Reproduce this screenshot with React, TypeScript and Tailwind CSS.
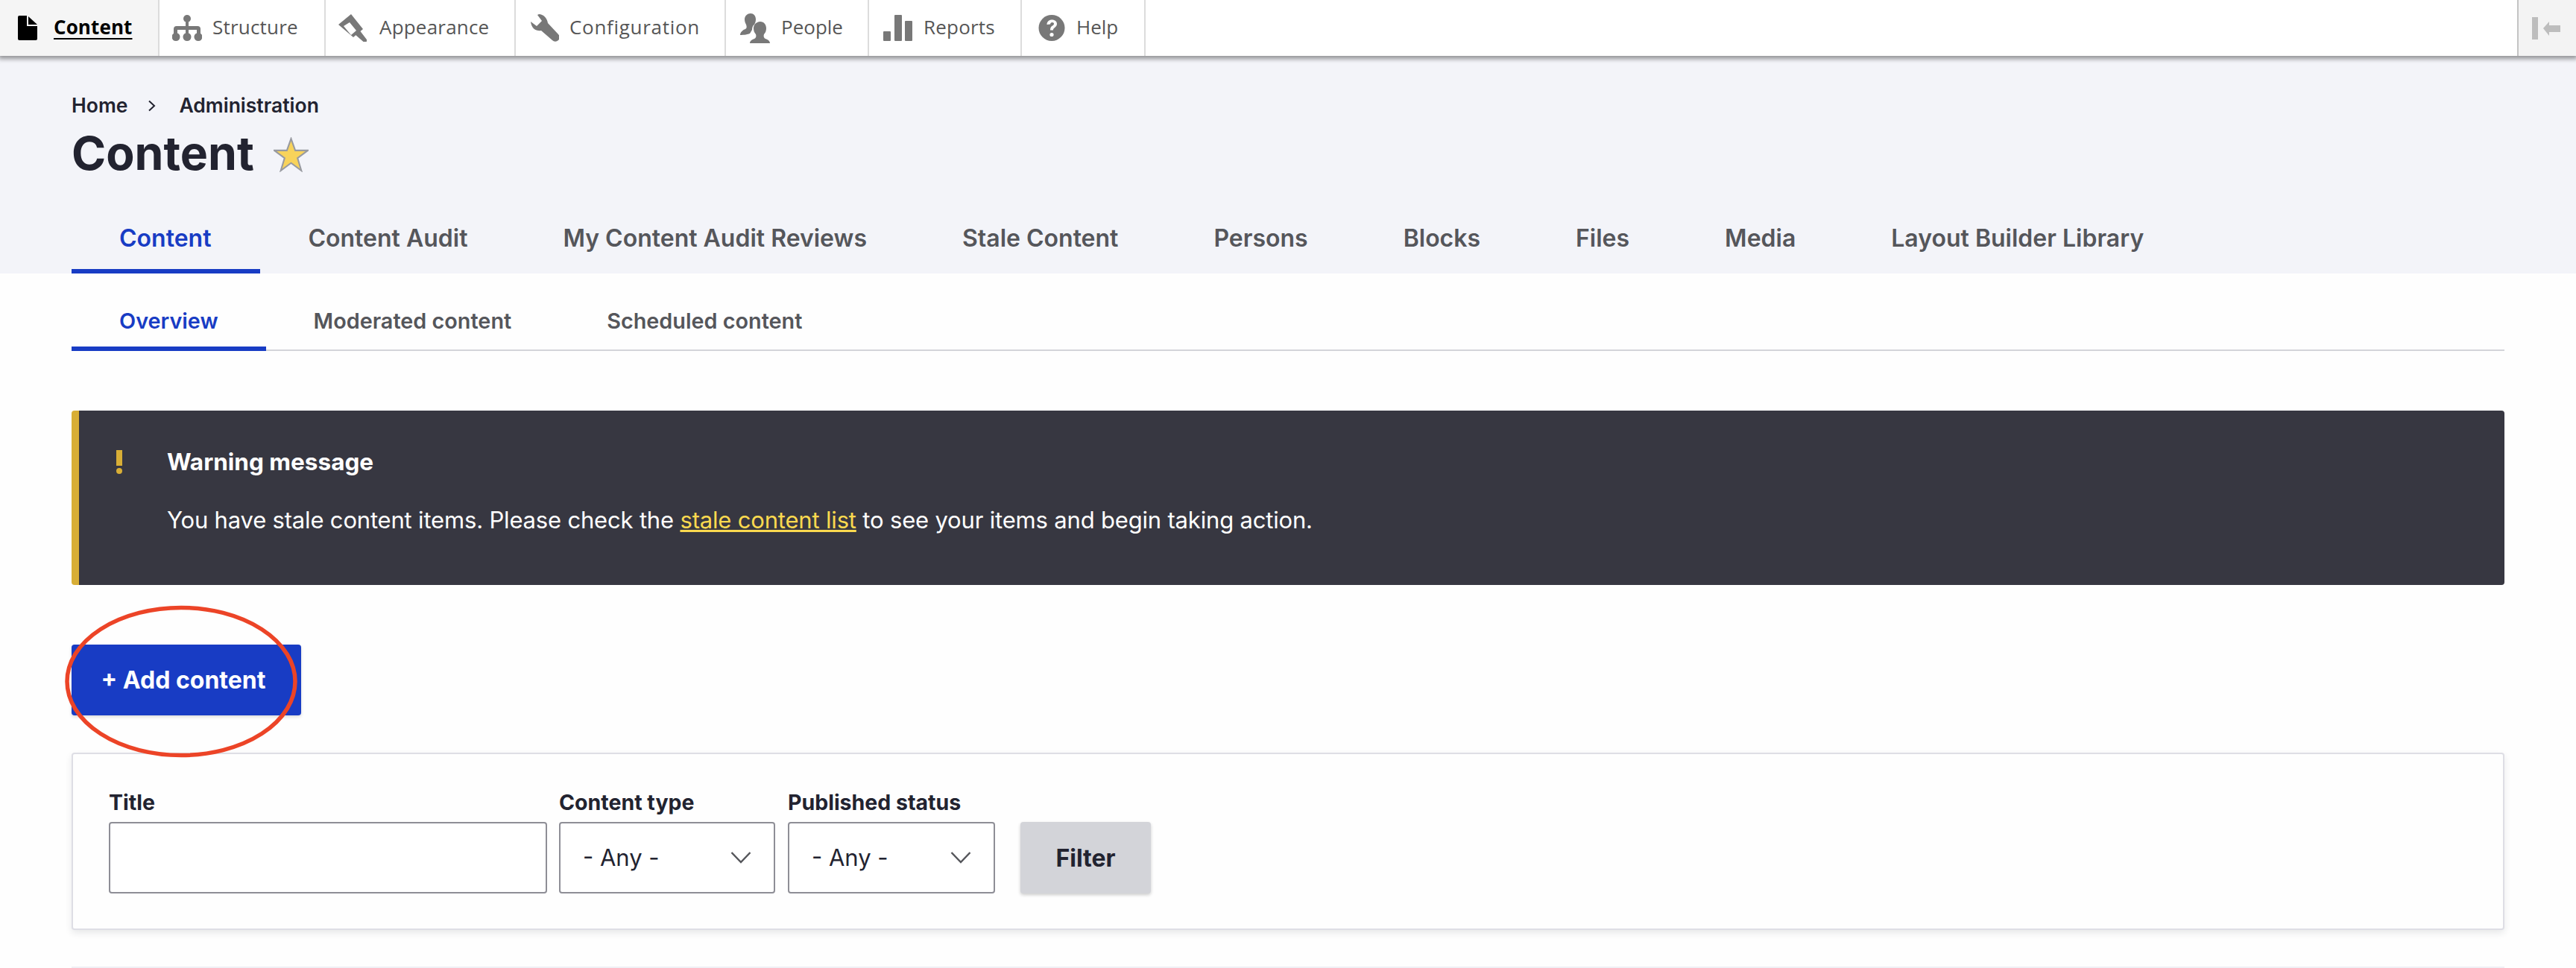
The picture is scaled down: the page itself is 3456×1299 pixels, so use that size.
import React from 'react'

const inter = "font-['Inter',sans-serif]"

const FileIcon = () => (
    <svg width="26" height="33" viewBox="0 0 26 33" fill="#000"><path d="M0 2a2 2 0 0 1 2-2h10v14h14v17a2 2 0 0 1-2 2H2a2 2 0 0 1-2-2z" /><path d="M14 1l12 11H14z" /></svg>
)
const TreeIcon = () => (
    <svg width="40" height="35" viewBox="0 0 40 35" fill="#787878"><circle cx="20" cy="5" r="5" /><circle cx="5" cy="29.500" r="5.500" /><circle cx="20" cy="29.500" r="5.500" /><circle cx="35" cy="29.500" r="5.500" /><path d="M18 8h4v7h12a4 4 0 0 1 4 4v8h-5v-7H22v7h-4v-7H7v7H2v-8a4 4 0 0 1 4-4h12z" /></svg>
)
const BrushIcon = () => (
    <svg width="38" height="37" viewBox="0 0 38 37" fill="#787878"><path d="M0 14L17 0l16 20-13 11zM7 16l10 12 7-6-9-11z" fillRule="evenodd" /><path d="M22 27l6-6 9.500 12.500a2.500 2.500 0 0 1-4 3.500z" /></svg>
)
const WrenchIcon = () => (
    <svg width="38" height="37" viewBox="0 0 38 37" fill="#787878"><path d="M11 0C17 0 22 5 23 12l14 15a5.500 5.500 0 0 1-8 8L14 22C8 23 1 20 0 10l8 6 7-7-6-8z" /></svg>
)
const PeopleIcon = () => (
    <svg width="40" height="40" viewBox="0 0 40 40" fill="#787878"><path d="M14 0c4 0 7 3 7 8 0 3-1 5-2 7-2 1-3 4-3 7l-3 5c-2 1-8 2-13 2 0-4 4-7 7-8 2-1 2-3 1-6-1-2-2-4-2-7 0-5 4-8 8-8z" /><path d="M27 11c5 0 8 4 8 9 0 3-1 6-3 8-1 3 0 5 2 6 3 1 6 3 6 6H13c0-3 3-5 6-6 2-1 3-3 2-6-2-2-3-5-3-8 0-5 4-9 9-9z" /></svg>
)
const BarsIcon = () => (
    <svg width="39" height="35" viewBox="0 0 39 35" fill="#787878"><rect x="0" y="22" width="10" height="13" rx="1" /><rect x="15" y="0" width="10" height="35" rx="1" /><rect x="29" y="8" width="10" height="27" rx="1" /></svg>
)
const HelpIcon = () => (
    <svg width="36" height="35" viewBox="0 0 36 35"><circle cx="18" cy="17.500" r="17.500" fill="#787878" /><path d="M11.500 13c0-4 3-6.500 6.800-6.500 4 0 6.700 2.300 6.700 5.600 0 3-2 4.200-3.500 5.300-1.200.9-1.500 1.500-1.500 3h-4c0-3 .8-4.300 2.500-5.600 1.500-1.100 2.500-1.700 2.500-2.900 0-1.200-1-1.900-2.300-1.900-1.500 0-2.500 1-2.600 2.500z" fill="#fff" /><circle cx="18" cy="26.500" r="2.600" fill="#fff" /></svg>
)

const toolbarItems = [
    { label: 'Content', width: 'w-[214px]', pad: 'pl-[24px]', gap: 'gap-[22px]', track: 'tracking-[0.1px]', icon: <FileIcon />, active: true },
    { label: 'Structure', width: 'w-[223px]', pad: 'pl-[17px]', gap: 'gap-[14px]', track: 'tracking-[0.2px]', icon: <TreeIcon /> },
    { label: 'Appearance', width: 'w-[255px]', pad: 'pl-[17px]', gap: 'gap-[17px]', track: 'tracking-[0.2px]', icon: <BrushIcon /> },
    { label: 'Configuration', width: 'w-[282px]', pad: 'pl-[20px]', gap: 'gap-[14px]', track: 'tracking-[0.7px]', icon: <WrenchIcon /> },
    { label: 'People', width: 'w-[192px]', pad: 'pl-[19px]', gap: 'gap-[15px]', track: 'tracking-normal', icon: <PeopleIcon /> },
    { label: 'Reports', width: 'w-[205px]', pad: 'pl-[19px]', gap: 'gap-[15px]', track: 'tracking-[0.2px]', icon: <BarsIcon /> },
    { label: 'Help', width: 'w-[166px]', pad: 'pl-[22px]', gap: 'gap-[15px]', track: 'tracking-normal', icon: <HelpIcon /> },
]

const primaryTabs = ['Content', 'Content Audit', 'My Content Audit Reviews', 'Stale Content', 'Persons', 'Blocks', 'Files', 'Media', 'Layout Builder Library']
const secondaryTabs = ['Overview', 'Moderated content', 'Scheduled content']

const Chevron = () => (
    <svg className="absolute right-[32px] top-[40px] pointer-events-none" width="28" height="16" viewBox="0 0 28 16" fill="none" stroke="#55565b" strokeWidth="2.500"><path d="M1.500 1l12.500 13L26.500 1" /></svg>
)

const App: React.FC = () => {
    return (
        <div className={`relative h-[1299px] overflow-hidden bg-[#fefefe] text-[#222330] ${inter}`}>
            <div className="relative z-10 flex h-[75px] bg-white shadow-[0_2px_6px_2px_rgba(0,0,0,0.4)] font-['Open_Sans',sans-serif] text-[26px]">
                {toolbarItems.map((item) => (
                    <div key={item.label} className={`flex items-center border-r-2 border-[#dcdcdc] ${item.width} ${item.pad} ${item.gap} ${item.track} ${item.active ? 'bg-[#f5f5f5] text-black font-bold' : 'text-[#565656]'}`}>
                        {item.icon}
                        <span className={`-mt-[3px] ${item.active ? 'underline underline-offset-[5px] decoration-2' : ''}`}>{item.label}</span>
                    </div>
                ))}
                <div className="ml-auto flex w-[79px] items-center gap-[7px] border-l-2 border-[#c4c4c4] bg-[#f3f3f3] pl-[18px]">
                    <svg width="38" height="30" viewBox="0 0 38 30" fill="#bdbdbd"><rect x="0" y="0" width="8" height="30" /><path d="M15 15l8-9v5h15v9H23v5z" /></svg>
                </div>
            </div>

            <div className="h-[292px] bg-[#f3f4f9] px-[96px] pt-[47px]">
                <div className="flex h-[40px] items-center text-[26.500px] font-semibold">
                    <span>Home</span>
                    <svg className="ml-[27px] mr-[31px]" width="11" height="16" viewBox="0 0 11 16" fill="none" stroke="#222330" strokeWidth="2"><path d="M2 1.500L9 8l-7 6.500" /></svg>
                    <span>Administration</span>
                </div>
                <div className="mt-[3px] flex h-[80px] items-center text-[62.500px] font-bold">
                    <span className="mt-[2px]">Content</span>
                    <svg className="ml-[26px] mt-[4px]" width="47" height="47" viewBox="0 0 46 46" fill="#f8d35b" stroke="#989aa0" strokeWidth="2"><path d="M23 2l5.500 15.500H45L31.500 27.500 36.500 44 23 34 9.500 44l5-16.500L1 17.500h16.500z" /></svg>
                </div>
                <div className="mt-[54px] flex">
                    {primaryTabs.map((tab, i) => (
                        <div key={tab} className={`h-[68px] border-b-[6px] pt-[1px] text-[32px] font-semibold leading-[40px] ${i === 0 ? 'pl-[64px] pr-[66px] border-[#183cc4] text-[#183cc4]' : 'px-[64px] border-transparent text-[#55565b]'}`}>{tab}</div>
                    ))}
                </div>
            </div>

            <div className="px-[96px]">
                <div className="flex h-[104px] items-end border-b-2 border-[#d3d4d9]">
                    {secondaryTabs.map((tab, i) => (
                        <div key={tab} className={`-mb-[2px] h-[58px] border-b-[6px] px-[64px] text-[28.800px] font-semibold leading-[36px] ${i === 0 ? 'border-[#183cc4] text-[#183cc4]' : 'border-transparent text-[#55565b]'}`}>{tab}</div>
                    ))}
                </div>

                <div className="mt-[80px] flex h-[234px] rounded-[4px] border-l-[10px] border-[#d8ae36] bg-[#373741] pl-[50px] pt-[45px] text-white">
                    <svg className="mt-[8px]" width="8" height="32" viewBox="0 0 8 32" fill="#d8ae36"><path d="M0 0h8v21H0z" /><circle cx="4" cy="28" r="4" /></svg>
                    <div className="ml-[60px]">
                        <div className="text-[31.500px] font-bold leading-[48px]">Warning message</div>
                        <div className="mt-[30px] text-[31px] leading-[48px] tracking-[-0.18px]">You have stale content items. Please check the <a className="text-[#fbd94f] underline">stale content list</a> to see your items and begin taking action.</div>
                    </div>
                </div>

                <div className="mt-[80px] flex h-[95px] w-[308px] items-center justify-center rounded-[4px] bg-[#183cc4] pr-[8px] text-[32px] font-bold text-white shadow-[0_2px_4px_rgba(0,0,0,0.15)]">+ Add content</div>

                <div className="mt-[50px] flex h-[238px] items-start rounded-[4px] border-2 border-[#dedee5] bg-[#fefefe] pl-[48px] pt-[47px] shadow-[0_4px_10px_rgba(34,35,48,0.1)]">
                    <div className="w-[588px]">
                        <div className="mb-[8px] text-[28.500px] font-bold leading-[36px]">Title</div>
                        <input className="block h-[96px] w-full rounded-[4px] border-2 border-[#8e8e96] bg-white" />
                    </div>
                    <div className="ml-[16px] w-[290px]">
                        <div className="mb-[8px] text-[28.500px] font-bold leading-[36px]">Content type</div>
                        <div className="relative">
                            <select className="block h-[96px] w-full appearance-none rounded-[4px] border-2 border-[#8e8e96] bg-white pl-[30px] text-[31px]"><option>- Any -</option></select>
                            <Chevron />
                        </div>
                    </div>
                    <div className="ml-[17px] w-[278px]">
                        <div className="mb-[8px] text-[28.500px] font-bold leading-[36px]">Published status</div>
                        <div className="relative">
                            <select className="block h-[96px] w-full appearance-none rounded-[4px] border-2 border-[#8e8e96] bg-white pl-[30px] text-[31px]"><option>- Any -</option></select>
                            <Chevron />
                        </div>
                    </div>
                    <button className="ml-[34px] mt-[44px] h-[96px] w-[175px] rounded-[4px] bg-[#d3d4d9] pt-[2px] text-[32px] font-bold shadow-[0_2px_4px_rgba(0,0,0,0.2)]">Filter</button>
                </div>

                <div className="mt-[49px] h-[2px] bg-[#f0f0f5]" />
            </div>

            {/* hand drawn annotation around the button */}
            <svg className="absolute left-[87px] top-[812px] pointer-events-none" width="314" height="205" viewBox="0 0 314 205" fill="none" stroke="#ec4427" strokeWidth="5.500"><ellipse cx="156" cy="102.500" rx="153" ry="99" /></svg>
        </div>
    )
}

export default App
